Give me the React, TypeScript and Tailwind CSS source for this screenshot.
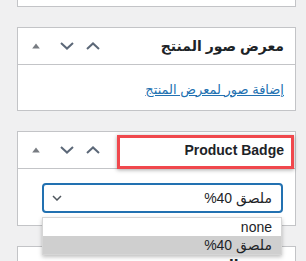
import React from "react";

const font = { fontFamily: '"Liberation Sans", "DejaVu Sans", Arial, sans-serif' };

function Tri() {
  return (
    <svg width="8" height="6" viewBox="0 0 8 6" className="block">
      <path d="M4 0.5 L7.8 5.5 L0.2 5.5 Z" fill="#787c82" />
    </svg>
  );
}

function ChevDown() {
  return (
    <svg width="14" height="8" viewBox="0 0 14 8" className="block">
      <path d="M1 1 L7 6.6 L13 1" fill="none" stroke="#5c6878" strokeWidth="2" />
    </svg>
  );
}

function ChevUp() {
  return (
    <svg width="14" height="8" viewBox="0 0 14 8" className="block">
      <path d="M1 7 L7 1.4 L13 7" fill="none" stroke="#5c6878" strokeWidth="2" />
    </svg>
  );
}

function Handles() {
  return (
    <div className="flex items-center pl-[14px]">
      <Tri />
      <div className="ml-[20px]">
        <ChevDown />
      </div>
      <div className="ml-[12px]">
        <ChevUp />
      </div>
    </div>
  );
}

export default function App() {
  return (
    <div
      className="w-[306px] h-[261px] overflow-hidden bg-[#f0f0f1] pl-[17px] pr-[10px] text-[#1d2327]"
      style={font}
    >
      <div className="h-[7px] border-x border-b border-[#c3c4c7] bg-white" />

      <div className="mt-[20px] border border-[#c3c4c7] bg-white">
        <div className="h-[37px] border-b border-[#c3c4c7] flex items-center justify-between pr-[11px]">
          <Handles />
          <div dir="rtl" className="text-[14px] font-bold">معرض صور المنتج</div>
        </div>
        <div className="h-[45px] flex items-center justify-end pr-[11px] pt-[4px]">
          <a dir="rtl" className="text-[13px] text-[#2271b1] underline">
            إضافة صور لمعرض المنتج
          </a>
        </div>
      </div>

      <div className="mt-[20px] border border-[#c3c4c7] bg-white">
        <div className="relative h-[37px] border-b border-[#c3c4c7] flex items-center justify-between pr-[11px]">
          <Handles />
          <div className="text-[14px] font-bold text-[#1d2327]">Product Badge</div>
          <div className="absolute left-[99px] top-[3px] w-[177px] h-[34px] border-[3px] border-[#f0484d] shadow-[0_1px_4px_rgba(0,0,0,0.35)]" />
        </div>
        <div className="relative h-[56px] pt-[14px] pl-[24px] pr-[12px]">
          <div className="relative">
            <div className="h-[30px] rounded-[4px] border-2 border-[#2271b1] flex items-center justify-between pl-[8px] pr-[9px]">
              <svg width="10" height="6" viewBox="0 0 10 6" className="block">
                <path d="M1 1 L5 5 L9 1" fill="none" stroke="#50575e" strokeWidth="1.5" />
              </svg>
              <span dir="rtl" className="text-[14px]">ملصق 40%</span>
            </div>
            <div className="absolute left-0 top-[34px] w-[240px] z-10 bg-white border border-[#d6d6d6] shadow-[0_2px_4px_rgba(0,0,0,0.25)] text-[14px]">
              <div className="h-[18px] flex items-center justify-end pr-[9px]">none</div>
              <div className="h-[18px] flex items-center justify-end pr-[9px] bg-[#cfcfcf]">
                <span dir="rtl">ملصق 40%</span>
              </div>
            </div>
          </div>
        </div>
      </div>

      <div className="mt-[20px] border border-[#c3c4c7] bg-white">
        <div className="h-[37px] border-b border-[#c3c4c7] flex items-center justify-between pr-[11px]">
          <Handles />
          <div dir="rtl" className="text-[14px] font-bold">وسوم المنتج</div>
        </div>
      </div>
    </div>
  );
}
